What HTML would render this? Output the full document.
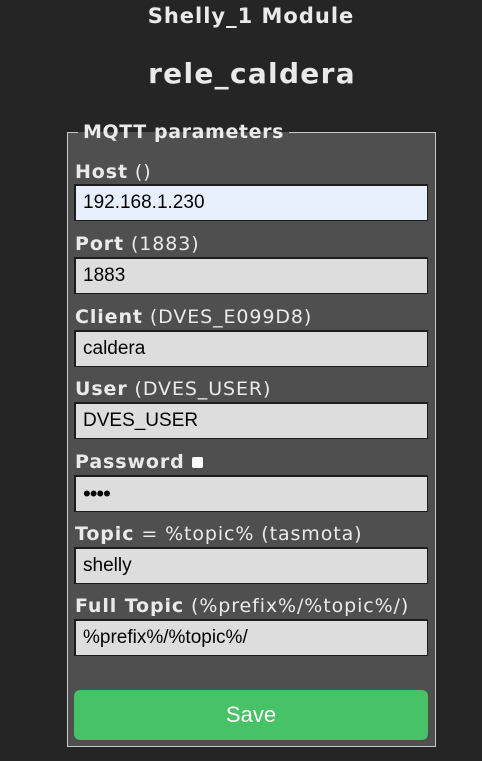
<!DOCTYPE html>
<html><head><meta charset="utf-8"><style>
body{margin:0;width:482px;height:761px;background:#252525;color:#eaeaea;font-family:"DejaVu Sans",Verdana,sans-serif;position:relative;overflow:hidden}
.a{position:absolute;white-space:nowrap}
.t1{left:0;width:502px;text-align:center;top:4px;font-size:21px;letter-spacing:1px;font-weight:bold}
.t2{left:0;width:504px;text-align:center;top:57px;font-size:28px;letter-spacing:1.3px;font-weight:bold}
.fs{left:67px;top:132px;width:369px;height:615px;border:1px solid #c8c8c8;background:#4f4f4f;box-sizing:border-box}
.lg{left:78px;top:120px;padding:0 5px;font-size:19px;letter-spacing:0.6px;font-weight:bold;line-height:24px}
.lb{left:75px;font-size:19px;letter-spacing:0.9px;line-height:22px}
.in{left:74px;width:354px;height:37px;box-sizing:border-box;border:2px solid #1d1d1d;border-width:2px 1px 1px 2px;background:#dddddd;color:#000;font-family:"Liberation Sans",Arial,sans-serif;font-size:19px;line-height:33px;padding-left:7px}
.btn{left:74px;top:690px;width:354px;height:50px;background:#47c266;border-radius:6px;color:#fff;font-family:"Liberation Sans",Arial,sans-serif;font-size:22px;text-align:center;line-height:50px}
</style></head><body>
<div class="a t1">Shelly_1 Module</div>
<div class="a t2">rele_caldera</div>
<div class="a fs"></div>
<div class="a lg" style="background:linear-gradient(#252525 50%,#4f4f4f 50%)">MQTT parameters</div>
<div class="a lb" style="top:161px"><b>Host</b> ()</div>
<div class="a in" style="top:184px;background:#e8f0fe">192.168.1.230</div>
<div class="a lb" style="top:233px"><b>Port</b> (1883)</div>
<div class="a in" style="top:257px">1883</div>
<div class="a lb" style="top:306px"><b>Client</b> (DVES_E099D8)</div>
<div class="a in" style="top:330px">caldera</div>
<div class="a lb" style="top:378px"><b>User</b> (DVES_USER)</div>
<div class="a in" style="top:402px">DVES_USER</div>
<div class="a lb" style="top:451px"><b>Password</b> <span style="display:inline-block;width:11px;height:11px;background:#fff;border-radius:2px;vertical-align:0px"></span></div>
<div class="a in" style="top:475px;font-size:22px;letter-spacing:-1px">••••</div>
<div class="a lb" style="top:523px"><b>Topic</b> = %topic% (tasmota)</div>
<div class="a in" style="top:547px">shelly</div>
<div class="a lb" style="top:595px"><b>Full Topic</b> (%prefix%/%topic%/)</div>
<div class="a in" style="top:619px">%prefix%/%topic%/</div>
<div class="a btn">Save</div>
</body></html>
